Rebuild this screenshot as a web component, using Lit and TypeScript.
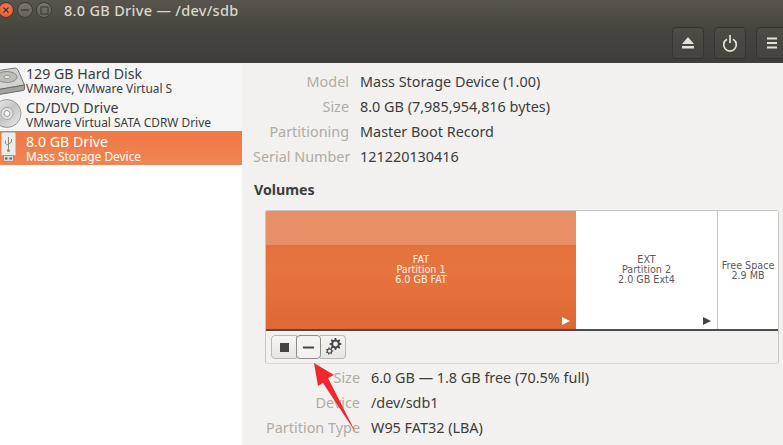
import { LitElement, html, css } from "lit";
import { customElement } from "lit/decorators.js";

function gear(cx: number, cy: number, r: number, teeth: number, hole: number): string {
  const pts: string[] = [];
  const step = (Math.PI * 2) / teeth;
  for (let i = 0; i < teeth; i++) {
    const a = i * step;
    const add = (ang: number, rad: number) =>
      pts.push(`${(cx + Math.cos(ang) * rad).toFixed(2)} ${(cy + Math.sin(ang) * rad).toFixed(2)}`);
    add(a - step * 0.32, r * 0.74);
    add(a - step * 0.16, r);
    add(a + step * 0.16, r);
    add(a + step * 0.32, r * 0.74);
  }
  return `M${pts.join("L")}Z M${cx + hole} ${cy}a${hole} ${hole} 0 1 0 ${-2 * hole} 0a${hole} ${hole} 0 1 0 ${2 * hole} 0Z`;
}

@customElement("app-root")
export class AppRoot extends LitElement {
  static styles = css`
    :host { display: block; width: 783px; height: 445px; overflow: hidden; font-family: "Noto Sans", "Open Sans", sans-serif; background: #f2f1f0; position: relative; }
    .titlebar { height: 24px; display: flex; align-items: center; background: linear-gradient(#57554d, #49483f); box-sizing: border-box; padding-bottom: 4px; }
    .wbtns { display: flex; gap: 3px; align-items: center; margin-left: -2px; width: 66px; flex: none; }
    .wbtn { width: 16px; height: 16px; border-radius: 50%; display: flex; align-items: center; justify-content: center; box-sizing: border-box; }
    .close { background: radial-gradient(circle at 50% 40%, #f0865a, #dc4f25); border: 1px solid #3a3934; }
    .min, .max { background: linear-gradient(#77756c, #65635a); border: 1px solid #3a3934; }
    .title { font-size: 14.5px; font-weight: 500; letter-spacing: 0.3px; color: #dad6cc; white-space: nowrap; }
    .toolbar { height: 39px; box-sizing: border-box; display: flex; justify-content: flex-end; align-items: flex-start; padding-top: 3px; gap: 10px; background: linear-gradient(#47463f, #3e3d38); margin-right: -5px; }
    .tbtn { width: 32px; height: 32px; box-sizing: border-box; border: 1px solid #353430; border-radius: 4px; background: linear-gradient(#4c4b44, #44433c); display: flex; align-items: center; justify-content: center; }
    .tbtn svg { display: block; }
    .body { display: flex; height: 382px; }
    .side { width: 242px; flex: none; background: #fff; }
    .row { height: 34px; display: flex; color: #3c3c3c; }
    .row.alt { background: #f5f5f5; }
    .row.sel { background: linear-gradient(#ee7844, #f18553); color: #fff; }
    .ic { width: 26px; flex: none; display: flex; align-items: center; overflow: hidden; }
    .rtext { display: flex; flex-direction: column; padding-top: 4px; white-space: nowrap; }
    .rname { font-size: 14.2px; line-height: 14px; }
    .rsub { font-size: 11.9px; line-height: 14px; }
    .main { flex: 1; min-width: 0; padding: 6px 0 0 11px; overflow: hidden; }
    .kv { display: grid; grid-template-columns: 96px 1fr; column-gap: 11px; }
    .k { color: #b0aba4; font-size: 14.4px; line-height: 25px; text-align: right; white-space: nowrap; }
    .v { color: #3c3c3c; font-size: 14.4px; line-height: 25px; white-space: nowrap; }
    .vol-h { font-weight: 700; font-size: 14.2px; color: #3c3c3c; line-height: 18px; margin-top: 12px; padding-left: 1px; }
    .frame { margin: 11px 0 0 12px; width: 514px; height: 154px; box-sizing: border-box; border: 1px solid #c8c6c2; border-radius: 3px; background: #f2f1f0; border-bottom-color: #dcdad6; }
    .bar { height: 120px; display: flex; border-bottom: 2px solid #4c4c4c; background: #fff; box-sizing: border-box; font-family: "DejaVu Sans", sans-serif; font-size: 9.6px; line-height: 10px; color: #5a5a5a; text-align: center; }
    .seg { position: relative; box-sizing: border-box; padding-top: 44px; }
    .fat { width: 310px; color: #fff0e6; background: linear-gradient(#e16f38, #e6743f 50%, #df6833); }
    .fat .gloss { position: absolute; left: 0; right: 0; top: 0; height: 34px; background: #e88f67; }
    .fat .lbl { position: relative; }
    .ext { width: 142px; border-right: 1px solid #c4c4c4; }
    .free { flex: 1; padding-top: 50px; padding-left: 1px; padding-right: 1px; }
    .arrow { position: absolute; right: 6px; bottom: 4px; width: 0; height: 0; border-left: 8px solid #444; border-top: 4.5px solid transparent; border-bottom: 4.5px solid transparent; }
    .fat .arrow { border-left-color: #fff; }
    .tools { display: flex; padding: 4px 0 0 5px; }
    .tool { width: 25px; height: 24px; box-sizing: border-box; border: 1px solid #bbb8b2; background: linear-gradient(#f6f5f4, #e8e6e3); display: flex; align-items: center; justify-content: center; }
    .tool.l { border-radius: 4px 0 0 4px; width: 26px; }
    .tool.m { border-radius: 4px; border-color: #8f8c86; width: 25px; margin: 0 -1px; position: relative; background: #f3f2f0; }
    .tool.r { border-radius: 0 4px 4px 0; border-left: none; width: 26px; }
    .kv2 { display: grid; grid-template-columns: 107px 1fr; column-gap: 11px; margin-top: 1px; }
    .arrowmark { position: absolute; left: 300px; top: 348px; pointer-events: none; }
  `;

  private disk() {
    return html`<svg width="26" height="34" viewBox="0 0 26 34">
      <path d="M-4 8 L15 5 Q17 5 18 7 L24.500 22 L-4 27 Z" fill="#d3d3d0" stroke="#777"/>
      <path d="M-4 27 L24.500 22 V26 Q24.500 27 23 27.500 L-4 32 Z" fill="#a3a3a0" stroke="#6a6a68"/>
      <ellipse cx="7" cy="14" rx="10" ry="5.500" fill="#bcbcb9" stroke="#8a8a88"/>
      <ellipse cx="7" cy="14" rx="3" ry="1.700" fill="#e6e6e4" stroke="#999"/>
    </svg>`;
  }
  private cd() {
    return html`<svg width="26" height="34" viewBox="0 0 26 34">
      <defs><linearGradient id="cdg" x1="0" y1="0" x2="1" y2="1"><stop offset="0" stop-color="#efefef"/><stop offset=".5" stop-color="#c4c4c4"/><stop offset="1" stop-color="#ececec"/></linearGradient></defs>
      <circle cx="7" cy="16.500" r="14" fill="url(#cdg)" stroke="#9a9a9a"/>
      <circle cx="7" cy="16.500" r="6" fill="#e3e3e3" stroke="#a5a5a5"/>
      <circle cx="7" cy="16.500" r="3" fill="#f8f8f8" stroke="#999"/>
    </svg>`;
  }
  private usb() {
    return html`<svg width="26" height="34" viewBox="0 0 26 34">
      <rect x="1.500" y="1.500" width="14" height="23" rx="1.500" fill="#ebebe8" stroke="#c4c4c0"/>
      <rect x="3.500" y="24.500" width="10" height="6" fill="#d8d8d4" stroke="#97978f"/>
      <rect x="5" y="26.500" width="2.500" height="2" fill="#666"/><rect x="9.500" y="26.500" width="2.500" height="2" fill="#666"/>
      <path d="M8.500 6v13M5.500 9.500v3l3 2M11.500 8v3l-3 2" fill="none" stroke="#8b8b87"/>
      <circle cx="8.500" cy="19.500" r="1.500" fill="#8b8b87"/>
    </svg>`;
  }

  render() {
    return html`
      <div class="titlebar">
        <div class="wbtns">
          <div class="wbtn close"><svg width="8" height="8" viewBox="0 0 8 8"><path d="M1.500 1.500l5 5M6.500 1.500l-5 5" stroke="#6b2410" stroke-width="1.300"/></svg></div>
          <div class="wbtn min"><svg width="10" height="8" viewBox="0 0 10 8"><path d="M1 4h8" stroke="#3f3e39" stroke-width="1.400"/></svg></div>
          <div class="wbtn max"><svg width="9" height="9" viewBox="0 0 9 9"><rect x="1" y="1" width="7" height="7" fill="none" stroke="#3f3e39" stroke-width="1.200"/></svg></div>
        </div>
        <div class="title">8.0 GB Drive — /dev/sdb</div>
      </div>
      <div class="toolbar">
        <div class="tbtn"><svg width="14" height="12" viewBox="0 0 14 12"><path d="M7 0L13 7H1Z M1 9h12v2.500H1Z" fill="#e4e1d9"/></svg></div>
        <div class="tbtn"><svg width="16" height="17" viewBox="0 0 16 17"><path d="M5 4.200A6.300 6.300 0 1 0 11 4.200" fill="none" stroke="#e4e1d9" stroke-width="1.700"/><path d="M8 0v8" stroke="#e4e1d9" stroke-width="1.700"/></svg></div>
        <div class="tbtn"><svg width="12" height="12" viewBox="0 0 12 12"><path d="M1 1.500h10M1 6h10M1 10.500h10" stroke="#e4e1d9" stroke-width="2"/></svg></div>
      </div>
      <div class="body">
        <div class="side">
          <div class="row alt"><div class="ic">${this.disk()}</div><div class="rtext"><div class="rname">129 GB Hard Disk</div><div class="rsub">VMware, VMware Virtual S</div></div></div>
          <div class="row alt"><div class="ic">${this.cd()}</div><div class="rtext"><div class="rname">CD/DVD Drive</div><div class="rsub">VMware Virtual SATA CDRW Drive</div></div></div>
          <div class="row sel"><div class="ic">${this.usb()}</div><div class="rtext"><div class="rname">8.0 GB Drive</div><div class="rsub">Mass Storage Device</div></div></div>
        </div>
        <div class="main">
          <div class="kv">
            <div class="k">Model</div><div class="v">Mass Storage Device (1.00)</div>
            <div class="k">Size</div><div class="v">8.0 GB (7,985,954,816 bytes)</div>
            <div class="k">Partitioning</div><div class="v">Master Boot Record</div>
            <div class="k">Serial Number</div><div class="v">121220130416</div>
          </div>
          <div class="vol-h">Volumes</div>
          <div class="frame">
            <div class="bar">
              <div class="seg fat"><div class="gloss"></div><div class="lbl">FAT<br>Partition 1<br>6.0 GB FAT</div><div class="arrow"></div></div>
              <div class="seg ext">EXT<br>Partition 2<br>2.0 GB Ext4<div class="arrow"></div></div>
              <div class="seg free">Free Space<br>2.9 MB</div>
            </div>
            <div class="tools">
              <div class="tool l"><svg width="9" height="9"><rect width="9" height="9" fill="#444"/></svg></div>
              <div class="tool m"><svg width="11" height="3"><rect y="0.500" width="11" height="2" fill="#444"/></svg></div>
              <div class="tool r"><svg width="22" height="20" viewBox="0 0 22 20"><path fill-rule="evenodd" fill="#444" d="${gear(13.5, 7, 6, 8, 2.4)}"/><path fill-rule="evenodd" fill="#555" d="${gear(7.5, 14, 3.8, 7, 1.6)}"/></svg></div>
            </div>
          </div>
          <div class="kv2">
            <div class="k">Size</div><div class="v">6.0 GB — 1.8 GB free (70.5% full)</div>
            <div class="k">Device</div><div class="v">/dev/sdb1</div>
            <div class="k">Partition Type</div><div class="v">W95 FAT32 (LBA)</div>
          </div>
        </div>
      </div>
      <svg class="arrowmark" width="70" height="95" viewBox="300 348 70 95">
        <path d="M314 363 L334 375 L328 378 L356 433 L323 383 L318 386 Z" fill="#f0272d"/>
      </svg>
    `;
  }
}
